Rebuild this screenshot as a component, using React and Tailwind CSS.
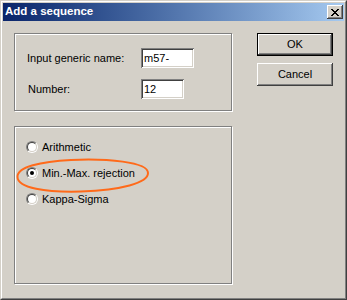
import React from 'react';

const raised =
  'shadow-[inset_-1px_-1px_0_#404040,inset_1px_1px_0_#ffffff,inset_-2px_-2px_0_#808080,inset_2px_2px_0_#d4d0c8]';
const sunken =
  'shadow-[inset_1px_1px_0_#808080,inset_-1px_-1px_0_#ffffff,inset_2px_2px_0_#404040,inset_-2px_-2px_0_#d4d0c8]';
const etched = 'border border-[#808080] shadow-[1px_1px_0_#ffffff,inset_1px_1px_0_#ffffff]';

const Radio = ({ checked, label }) => (
  <div className="h-[26px] flex items-center">
    <div className="ml-[11px] w-[12px] h-[12px] rounded-full border border-t-[#808080] border-l-[#808080] border-b-white border-r-white">
      <div className="w-full h-full rounded-full border border-t-[#404040] border-l-[#404040] border-b-[#d4d0c8] border-r-[#d4d0c8] bg-white flex items-center justify-center">
        {checked && <div className="w-[4px] h-[4px] rounded-full bg-black" />}
      </div>
    </div>
    <span className="ml-[4px]">{label}</span>
  </div>
);

export default function App() {
  return (
    <div className="relative w-[347px] h-[300px] border border-t-[#d4d0c8] border-l-[#d4d0c8] border-b-[#404040] border-r-[#404040] bg-[#d4d0c8] text-black text-[11px] font-['Liberation_Sans',Arial,sans-serif]">
      <div className="h-full border border-t-white border-l-white border-b-[#808080] border-r-[#808080] p-px flex flex-col">
        {/* Title bar */}
        <div className="h-[18px] flex items-center justify-between pl-[2px] pr-[1px] bg-linear-to-r from-[#0a246a] to-[#a6caf0]">
          <span className="text-white font-bold text-[11.5px] leading-none">Add a sequence</span>
          <button className={`w-[16px] h-[14px] bg-[#d4d0c8] flex items-center justify-center ${raised}`}>
            <svg width="8" height="7" viewBox="0 0 8 7" shapeRendering="crispEdges">
              <path d="M0 0h2v1H0zM6 0h2v1H6zM1 1h2v1H1zM5 1h2v1H5zM2 2h4v1H2zM3 3h2v1H3zM2 4h4v1H2zM1 5h2v1H1zM5 5h2v1H5zM0 6h2v1H0zM6 6h2v1H6z" fill="#000" />
            </svg>
          </button>
        </div>

        {/* Body */}
        <div className="flex pl-[11px] pt-[12px]">
          <div className="w-[218px] flex flex-col">
            <div className={`h-[78px] pl-[12px] pt-[14px] ${etched}`}>
              <div className="flex items-center">
                <span className="w-[114px]">Input generic name:</span>
                <div className={`w-[53px] h-[20px] bg-white pl-[3px] flex items-center ${sunken}`}>m57-</div>
              </div>
              <div className="flex items-center mt-[11px]">
                <span className="w-[114px] pl-px">Number:</span>
                <div className={`w-[43px] h-[20px] bg-white pl-[3px] flex items-center ${sunken}`}>12</div>
              </div>
            </div>

            <div className={`mt-[15px] h-[158px] pt-[7px] ${etched}`}>
              <Radio label="Arithmetic" />
              <Radio checked label="Min.-Max. rejection" />
              <Radio label="Kappa-Sigma" />
            </div>
          </div>

          <div className="ml-[25px] flex flex-col">
            <div className="w-[76px] h-[23px] border border-black">
              <button className={`w-full h-full bg-[#d4d0c8] flex items-center justify-center ${raised}`}>OK</button>
            </div>
            <button className={`mt-[7px] w-[76px] h-[23px] bg-[#d4d0c8] flex items-center justify-center ${raised}`}>Cancel</button>
          </div>
        </div>
      </div>

      {/* Hand-drawn highlight */}
      <svg className="absolute left-0 top-0 pointer-events-none" width="347" height="300" viewBox="0 0 347 300">
        <path
          d="M16.5 176 C16 166 40 160.5 70 159 C105 157.5 147 160.5 147 172 C147 182 120 189 80 190.5 C45 191.5 16.5 187 16.5 176 Z"
          fill="none"
          stroke="#ff6a1a"
          strokeWidth="2"
        />
      </svg>
    </div>
  );
}
